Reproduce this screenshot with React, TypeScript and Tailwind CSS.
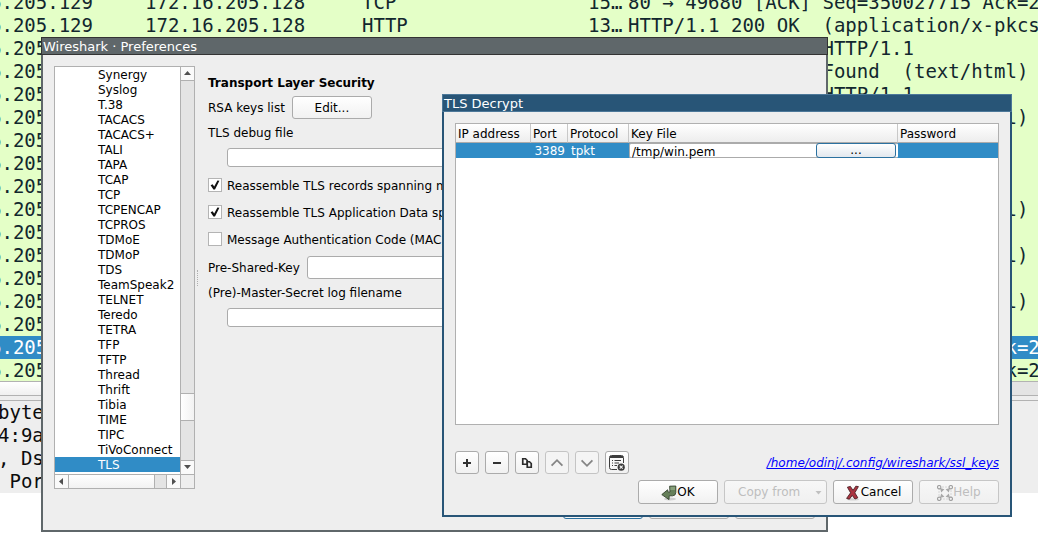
import { useState, type ReactNode } from "react";

type Packet = { dst?: string; proto?: string; len?: string; info: string; selected?: boolean };

const ACK = "80 → 49680 [ACK] Seq=350027715 Ack=2";
const NOT_FOUND = "HTTP/1.1 404 Not Found  (text/html)";
const FAVICON = "GET /favicon.ico HTTP/1.1";

const packets: Packet[] = [
  { dst: "172.16.205.128", proto: "TCP", len: "15…", info: ACK },
  { dst: "172.16.205.128", proto: "HTTP", len: "13…", info: "HTTP/1.1 200 OK  (application/x-pkcs" },
  { info: FAVICON },
  { info: NOT_FOUND },
  { info: FAVICON },
  { info: NOT_FOUND },
  { info: "" },
  { info: "" },
  { info: "" },
  { info: NOT_FOUND },
  { info: "" },
  { info: NOT_FOUND },
  { info: "" },
  { info: NOT_FOUND },
  { info: "" },
  { info: ACK, selected: true },
  { info: ACK },
];

const protocols = [
  "Synergy", "Syslog", "T.38", "TACACS", "TACACS+", "TALI", "TAPA", "TCAP", "TCP",
  "TCPENCAP", "TCPROS", "TDMoE", "TDMoP", "TDS", "TeamSpeak2", "TELNET", "Teredo",
  "TETRA", "TFP", "TFTP", "Thread", "Thrift", "Tibia", "TIME", "TIPC", "TiVoConnect", "TLS",
];

const raised = "border border-[#ababab] rounded-[3px] bg-gradient-to-b from-white to-[#f1f1f1]";

function PacketList() {
  return (
    <div className="h-[381px] overflow-hidden">
      <table className="-mt-[9px] w-full table-fixed border-collapse text-[19px] leading-[23px]">
        <colgroup>
          <col className="w-[145px]" />
          <col className="w-[217px]" />
          <col className="w-[226px]" />
          <col className="w-[40px]" />
          <col />
        </colgroup>
        <tbody>
          {packets.map((p, i) => (
            <tr
              key={i}
              className={p.selected ? "h-[23px] bg-[#308cc6] text-white" : "h-[23px] bg-[#e4ffc7] text-[#12272e]"}
            >
              <td className="p-0">
                <div className="flex justify-end overflow-hidden pr-[52px]">172.16.205.129</div>
              </td>
              <td className="p-0">{p.dst}</td>
              <td className="p-0">{p.proto}</td>
              <td className="p-0">{p.len}</td>
              <td className="p-0 overflow-hidden whitespace-pre">{p.info}</td>
            </tr>
          ))}
        </tbody>
      </table>
    </div>
  );
}

function Capture() {
  return (
    <main className="font-['DejaVu_Sans_Mono',monospace]">
      <PacketList />
      <div className="flex h-[15px] border-y border-[#b2b2b2] bg-[#e4e4e4]">
        <div className="w-4/5 bg-gradient-to-b from-white to-[#f0f0f0]" />
      </div>
      <div className="h-1 bg-[#eeeeee]" />
      <div className="flex h-[93px] overflow-hidden border-t border-[#b2b2b2] bg-[#eeeeee] text-[19px] leading-[23px] text-[#0c0c0c]">
        <pre className="-ml-0.5 font-['DejaVu_Sans_Mono',monospace]">{"byte\n4:9a\n, Ds\n Por"}</pre>
      </div>
    </main>
  );
}

function Arrow({ dir }: { dir: "up" | "down" | "left" | "right" }) {
  const d = {
    up: "M3 8 L6.5 4 L10 8Z",
    down: "M3 4 L6.5 8 L10 4Z",
    left: "M8 3 L4 6.5 L8 10Z",
    right: "M5 3 L9 6.5 L5 10Z",
  }[dir];
  return (
    <svg viewBox="0 0 13 13" className="size-[13px] fill-[#505050]">
      <path d={d} />
    </svg>
  );
}

function ProtocolTree() {
  const [current, setCurrent] = useState("TLS");
  return (
    <div className="w-[141px] shrink-0 self-start border border-[#b0b0b0] bg-white">
      <div className="flex">
        <ul role="listbox" aria-label="Protocols" className="min-w-0 flex-1 pb-0.5 leading-[17px]">
          {protocols.map((name) => (
            <li
              key={name}
              role="option"
              aria-selected={name === current}
              onClick={() => setCurrent(name)}
              className={
                name === current
                  ? "h-[15px] whitespace-nowrap bg-[#308cc6] pl-[43px] text-white"
                  : "h-[15px] whitespace-nowrap pl-[43px]"
              }
            >
              {name}
            </li>
          ))}
        </ul>
        <div className="flex w-[14px] flex-col border-l border-[#b0b0b0] bg-[#e4e4e4]">
          <button aria-label="Scroll up" className="border-b border-[#b0b0b0] bg-[#fafafa]">
            <Arrow dir="up" />
          </button>
          <div className="flex-1" />
          <div className="h-7 border-y border-[#b0b0b0] bg-gradient-to-r from-white to-[#f2f2f2]" />
          <div className="h-[39px]" />
          <button aria-label="Scroll down" className="border-t border-[#b0b0b0] bg-[#fafafa]">
            <Arrow dir="down" />
          </button>
        </div>
      </div>
      <div className="flex h-[14px] border-t border-[#b0b0b0] bg-[#e4e4e4]">
        <button aria-label="Scroll left" className="border-r border-[#b0b0b0] bg-[#fafafa]">
          <Arrow dir="left" />
        </button>
        <div className="flex-1 border-r border-[#b0b0b0] bg-gradient-to-b from-white to-[#f2f2f2]" />
        <div className="w-[11px]" />
        <button aria-label="Scroll right" className="border-l border-[#b0b0b0] bg-[#fafafa]">
          <Arrow dir="right" />
        </button>
        <div className="w-[14px] border-l border-[#b0b0b0] bg-[#eeeeee]" />
      </div>
    </div>
  );
}

function Check({ label, on }: { label: string; on?: boolean }) {
  return (
    <label className="flex h-[15px] gap-[5px] whitespace-nowrap">
      <span className="grid size-[14px] shrink-0">
        <input
          type="checkbox"
          defaultChecked={on}
          className="peer col-start-1 row-start-1 size-[14px] appearance-none border border-[#b4b4b4] bg-white"
        />
        <svg
          viewBox="0 0 14 14"
          className="pointer-events-none invisible col-start-1 row-start-1 size-[14px] peer-checked:visible"
        >
          <path d="M2.6 7.2 L4.6 6.2 L6.2 8.4 L9.4 2.6 L11.4 2.8 L7 11.4 L5.4 11.4Z" fill="#111" />
        </svg>
      </span>
      {label}
    </label>
  );
}

const field = "min-w-0 rounded-[3px] border border-[#ababab] bg-white px-1";

function PreferencesWindow() {
  return (
    <section
      aria-label="Preferences"
      className="absolute left-[41px] top-[37px] w-[787px] border-2 border-t-0 border-[#5f676a] bg-[#eeeeee]"
    >
      <h1 className="-mx-0.5 h-[18px] whitespace-nowrap border border-[#333333] bg-[#5f676a] pl-px text-[13px] leading-[18px] text-white">
        Wireshark · Preferences
      </h1>
      <div className="flex px-[11px] pt-[11px]">
        <ProtocolTree />
        <div className="flex w-[13px] items-center pl-0.5">
          <div className="h-4 border-l border-dotted border-[#b0b0b0]" />
        </div>
        <form className="flex flex-1 flex-col leading-[17px]" onSubmit={(e) => e.preventDefault()}>
          <h2 className="mt-[9px] h-[15px] font-bold">Transport Layer Security</h2>
          <div className="mt-1.5 flex items-center gap-[7px]">
            <span className="pt-0.5">RSA keys list</span>
            <button type="button" className={`h-[23px] w-20 pt-px ${raised}`}>Edit...</button>
          </div>
          <label htmlFor="debug-file" className="mt-1.5 h-[15px]">TLS debug file</label>
          <input id="debug-file" className={`ml-[19px] mt-2 h-[19px] ${field}`} />
          <div className="mt-[11px] flex flex-col gap-3">
            <Check on label="Reassemble TLS records spanning multiple TCP segments" />
            <Check on label="Reassemble TLS Application Data spanning multiple TLS records" />
            <Check label="Message Authentication Code (MAC), ignore “mac failed”" />
          </div>
          <div className="mt-[9px] flex items-center gap-[7px]">
            <label htmlFor="psk" className="pt-0.5">Pre-Shared-Key</label>
            <input id="psk" className={`h-[23px] flex-1 ${field}`} />
          </div>
          <label htmlFor="secret-log" className="mt-1.5 h-[15px]">(Pre)-Master-Secret log filename</label>
          <input id="secret-log" className={`ml-[19px] mt-2 h-[19px] ${field}`} />
        </form>
      </div>
      <div className="flex justify-end gap-1.5 pb-[11px] pr-[11px] pt-1.5">
        <button aria-label="OK" className="h-6 w-20 rounded-[3px] border border-[#2b71a0] bg-[#f6f6f6]" />
        <button aria-label="Cancel" className={`h-6 w-20 ${raised}`} />
        <button aria-label="Help" className={`h-6 w-20 ${raised}`} />
      </div>
    </section>
  );
}

function KeyTable() {
  const head = "h-[19px] border-r border-[#c8c8c8] p-0 pl-0.5 pt-0.5 text-left font-normal last:border-r-0";
  return (
    <div className="h-[302px] border border-[#b0b0b0] bg-white">
      <table className="w-full table-fixed border-separate border-spacing-0 leading-[15px]">
        <colgroup>
          <col className="w-[75px]" />
          <col className="w-[37px]" />
          <col className="w-[61px]" />
          <col className="w-[269px]" />
          <col />
        </colgroup>
        <thead>
          <tr className="bg-gradient-to-b from-white to-[#ececec]">
            {["IP address", "Port", "Protocol", "Key File", "Password"].map((h) => (
              <th key={h} className={`border-b border-b-[#ababab] ${head}`}>{h}</th>
            ))}
          </tr>
        </thead>
        <tbody>
          <tr className="h-[15px] bg-[#308cc6] text-white">
            <td className="p-0" />
            <td className="p-0 pr-[3px]">
              <div className="h-[15px] text-right leading-[17px]">3389</div>
            </td>
            <td className="p-0 pl-[3px]">
              <div className="h-[15px] leading-[17px]">tpkt</div>
            </td>
            <td className="p-0">
              <div className="flex h-[15px] rounded-[2px] border border-[#ababab] border-r-white bg-white text-black">
                <input
                  aria-label="Key file"
                  defaultValue="/tmp/win.pem"
                  className="h-[15px] min-w-0 flex-1 bg-transparent pl-0.5 pt-px leading-[15px] outline-none"
                />
                <button
                  aria-label="Browse for key file"
                  className="-my-px mr-px h-[15px] w-20 rounded-[3px] border border-[#2b71a0] bg-gradient-to-b from-white to-[#e2e8ee] leading-[13px]"
                >
                  ...
                </button>
              </div>
            </td>
            <td className="p-0" />
          </tr>
        </tbody>
      </table>
    </div>
  );
}

function ToolButton({ label, dim, children }: { label: string; dim?: boolean; children: ReactNode }) {
  return (
    <button
      aria-label={label}
      disabled={dim}
      className={
        dim
          ? "flex h-[23px] w-6 items-center justify-center rounded-[3px] border border-[#c4c4c4] bg-[#f4f4f4]"
          : `flex h-[23px] w-6 items-center justify-center ${raised}`
      }
    >
      {children}
    </button>
  );
}

function Toolbar() {
  const icon = "size-4";
  return (
    <div className="flex gap-1.5">
      <ToolButton label="Add key">
        <svg viewBox="0 0 16 16" className={icon} stroke="#333" strokeWidth="2">
          <path d="M4 8H12M8 4V12" />
        </svg>
      </ToolButton>
      <ToolButton label="Remove key">
        <svg viewBox="0 0 16 16" className={icon} stroke="#333" strokeWidth="2">
          <path d="M4 8H12" />
        </svg>
      </ToolButton>
      <ToolButton label="Copy key">
        <svg viewBox="0 0 16 16" className={icon} fill="none" stroke="#2c2c2c" strokeWidth="1.7">
          <path d="M3.75 3.75H6.5L8.25 5.5V9.25H3.75Z" />
          <path d="M8.25 6.75H10.5L12.25 8.5V12.25H8.25Z" fill="#f6f6f6" />
        </svg>
      </ToolButton>
      <ToolButton label="Move up" dim>
        <svg viewBox="0 0 16 16" className={icon} fill="none" stroke="#858585" strokeWidth="1.8">
          <path d="M2.6 10.6L8 5.2L13.4 10.6" />
        </svg>
      </ToolButton>
      <ToolButton label="Move down" dim>
        <svg viewBox="0 0 16 16" className={icon} fill="none" stroke="#858585" strokeWidth="1.8">
          <path d="M2.6 5.4L8 10.8L13.4 5.4" />
        </svg>
      </ToolButton>
      <ToolButton label="Clear all keys">
        <svg viewBox="0 0 18 18" className="size-[18px] shrink-0" fill="none" stroke="#3d3d3d">
          <path d="M9 15.5H3.5Q1.5 15.5 1.5 13.5V3.5Q1.5 1.5 3.5 1.5H13.5Q15.5 1.5 15.5 3.5V9" />
          <path d="M2 3H15" strokeWidth="2" />
          <path d="M4 6.5H5M6.5 6.5H13M4 9H5M6.5 9H11M4 11.5H5M6.5 11.5H9" />
          <circle cx="13.2" cy="13.2" r="3.6" fill="#3d3d3d" stroke="none" />
          <path d="M11.7 11.7L14.7 14.7M14.7 11.7L11.7 14.7" stroke="#f4f4f4" strokeWidth="1.1" />
        </svg>
      </ToolButton>
    </div>
  );
}

function OkIcon() {
  return (
    <svg viewBox="0 0 16 16" className="size-4">
      <ellipse cx="9" cy="14" rx="6" ry="1.4" fill="#cfcfcf" />
      <path
        d="M8.6 1.2L14.8 1V7.5Q14.8 10.6 11.6 10.8H8.2L8 14.6L0.8 9.6L6.6 4.8L7.2 7.2L9 7Z"
        fill="#66805a"
        stroke="#34432f"
        strokeWidth="0.9"
      />
      <path d="M9.5 2L14 1.8V5H9.4Z" fill="#87a07a" />
    </svg>
  );
}

function CancelIcon() {
  return (
    <svg viewBox="0 0 16 16" className="size-4">
      <ellipse cx="8" cy="14.4" rx="6" ry="1.2" fill="#d2d2d2" />
      <path
        d="M2.4 2.2L5.4 1.4L8 5.4L10.8 1.2L13.4 1.6L9.8 7.8L12.8 12.8L10 14L7.2 10.4L4.4 14.2L1.6 13.4L5.6 7.8Z"
        fill="#ab3340"
        stroke="#4b1f24"
        strokeWidth="0.9"
      />
    </svg>
  );
}

function HelpIcon() {
  return (
    <svg viewBox="0 0 16 16" className="size-4" fill="#a8a8a8">
      <rect x="2" y="2" width="12" height="12" fill="none" stroke="#d6d6d6" strokeDasharray="2 1" />
      <path d="M3 3L7.4 4.2L4.2 7.4ZM13 3L8.6 4.2L11.8 7.4ZM3 13L7.4 11.8L4.2 8.6ZM13 13L8.6 11.8L11.8 8.6Z" />
      <g fill="#f2f2f2" stroke="#a0a0a0" strokeWidth="1.1">
        <circle cx="2.2" cy="2.2" r="1.7" />
        <circle cx="13.8" cy="2.2" r="1.7" />
        <circle cx="2.2" cy="13.8" r="1.7" />
        <circle cx="13.8" cy="13.8" r="1.7" />
      </g>
    </svg>
  );
}

function DecryptDialog() {
  const off = "rounded-[3px] border border-[#c6c6c6] bg-gradient-to-b from-[#f7f7f7] to-[#f0f0f0] text-[#bebebe]";
  return (
    <section
      role="dialog"
      aria-label="TLS Decrypt"
      className="absolute left-[442px] top-[94px] w-[570px] border-2 border-t-0 border-[#285577] bg-[#eeeeee]"
    >
      <h2 className="-mx-0.5 h-[18px] whitespace-nowrap border border-[#4c7899] bg-[#285577] pl-px text-[13px] leading-[18px] text-white">
        TLS Decrypt
      </h2>
      <div className="flex flex-col p-[11px]">
        <KeyTable />
        <div className="mt-[26px] flex items-center justify-between">
          <Toolbar />
          <a href="#ssl_keys" className="italic text-[#0000ff] underline">
            /home/odinj/.config/wireshark/ssl_keys
          </a>
        </div>
        <div className="mt-1.5 flex justify-end gap-1.5 leading-[17px]">
          <button className={`flex h-6 w-20 items-center justify-center pt-px ${raised}`}>
            <OkIcon />
            OK
          </button>
          <button disabled className={`flex h-6 w-[103px] items-center justify-between pl-[13px] pr-1 pt-px ${off}`}>
            Copy from
            <svg viewBox="0 0 7 4" className="h-1 w-[7px] fill-[#c0c0c0]">
              <path d="M0.5 0H6.5L3.5 3.5Z" />
            </svg>
          </button>
          <button className={`flex h-6 w-20 items-center justify-center pt-px ${raised}`}>
            <CancelIcon />
            Cancel
          </button>
          <button disabled className={`flex h-6 w-20 items-center justify-center pt-px ${off}`}>
            <HelpIcon />
            Help
          </button>
        </div>
      </div>
    </section>
  );
}

export default function App() {
  return (
    <div className="relative min-h-screen overflow-hidden bg-white font-['DejaVu_Sans',sans-serif] text-[12px] text-black">
      <Capture />
      <PreferencesWindow />
      <DecryptDialog />
    </div>
  );
}
